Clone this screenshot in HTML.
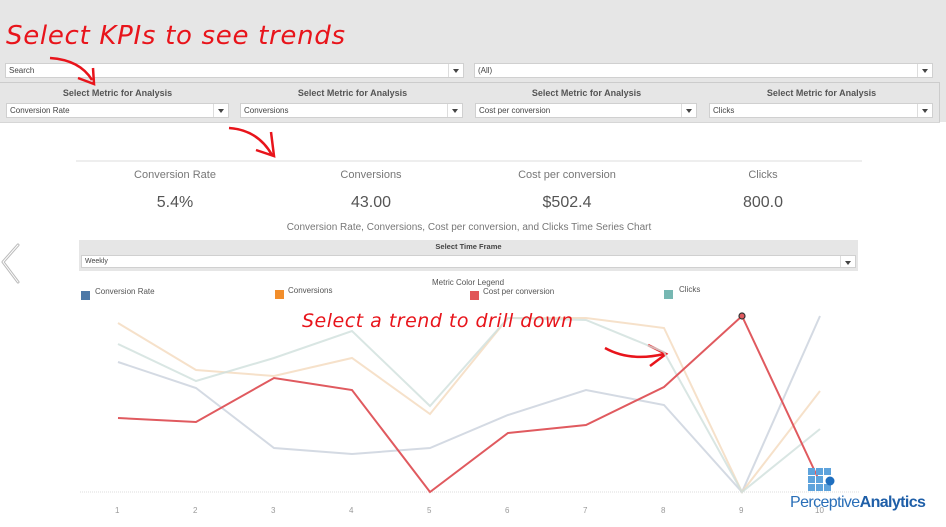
<!DOCTYPE html>
<html><head><meta charset="utf-8"><style>
*{margin:0;padding:0;box-sizing:border-box}
body{width:946px;height:527px;background:#fff;font-family:"Liberation Sans","DejaVu Sans",sans-serif;position:relative;overflow:hidden;color:#555}
.abs{position:absolute}
.top{left:0;top:0;width:946px;height:122px;background:#e6e6e6}
.dd{position:absolute;background:#fff;border:1px solid #d0d0d0;height:15px;font-size:8px;color:#444;padding-left:3px;line-height:13px}
.dd:after{content:"";position:absolute;right:4px;top:5px;border-left:3px solid transparent;border-right:3px solid transparent;border-top:4px solid #444}
.dd .sep{position:absolute;right:14px;top:0;width:1px;height:13px;background:#ddd}
.lbl{position:absolute;font-size:9px;font-weight:bold;color:#555;text-align:center;width:225px}
.hand{color:#e8141b;font-family:"DejaVu Sans","Liberation Sans",sans-serif;font-style:italic;font-weight:normal}
.kt{position:absolute;font-size:11px;color:#777;text-align:center;width:200px}
.kv{position:absolute;font-size:16px;color:#555;text-align:center;width:200px}
.leg{position:absolute;font-size:8px;color:#555}
.sw{position:absolute;width:9px;height:9px}
.ax{position:absolute;font-size:8px;color:#999;top:506px}
</style></head><body>
<div class="abs top"></div>
<div class="abs hand" style="left:6px;top:21px;font-size:26px;letter-spacing:0.7px">Select KPIs to see trends</div>
<div class="dd" style="left:5px;top:63px;width:459px">Search<span class="sep"></span></div>
<div class="dd" style="left:474px;top:63px;width:459px">(All)<span class="sep"></span></div>
<div class="abs" style="left:0;top:82px;width:940px;height:40px;border-top:1px solid #ccc;border-right:1px solid #ccc;background:#e6e6e6"></div>
<div class="abs" style="left:0;top:122px;width:940px;height:1px;background:#d6d6d6"></div>
<div class="lbl" style="left:5px;top:88px">Select Metric for Analysis</div>
<div class="lbl" style="left:240px;top:88px">Select Metric for Analysis</div>
<div class="lbl" style="left:474px;top:88px">Select Metric for Analysis</div>
<div class="lbl" style="left:709px;top:88px">Select Metric for Analysis</div>
<div class="dd" style="left:6px;top:103px;width:223px">Conversion Rate<span class="sep"></span></div>
<div class="dd" style="left:240px;top:103px;width:223px">Conversions<span class="sep"></span></div>
<div class="dd" style="left:475px;top:103px;width:222px">Cost per conversion<span class="sep"></span></div>
<div class="dd" style="left:709px;top:103px;width:224px">Clicks<span class="sep"></span></div>

<svg class="abs" style="left:0;top:0" width="946" height="527">
<path d="M50 58 Q80 60 92 80" stroke="#e8141b" stroke-width="2.5" fill="none"/>
<path d="M78 78 L94 84 L93 68" stroke="#e8141b" stroke-width="2.5" fill="none"/>
<path d="M229 128 Q258 130 272 155" stroke="#e8141b" stroke-width="2.5" fill="none"/>
<path d="M256 150 L274 156 L271 132" stroke="#e8141b" stroke-width="2.5" fill="none"/>
<path d="M605 348 Q630 362 664 354" stroke="#e8141b" stroke-width="2.5" fill="none"/>
<path d="M648 345 L666 354 L650 366" stroke="#e8141b" stroke-width="2.5" fill="none"/>
<path d="M18 245 L3 262 L18 282" stroke="#bbb" stroke-width="3" fill="none" stroke-linejoin="round" stroke-linecap="round"/>
<path d="M18 245 L3 262 L18 282" stroke="#fff" stroke-width="1" fill="none" stroke-linejoin="round" stroke-linecap="round"/>
<line x1="76" y1="161" x2="862" y2="161" stroke="#ddd"/>
<line x1="80" y1="492" x2="860" y2="492" stroke="#ddd" stroke-dasharray="1 1"/>
<polyline fill="none" stroke="#c9d1dc" stroke-width="2" opacity=".8" points="118,362 196,388 274,448 352,454 430,448 508,415 586,390 664,405 742,492 820,316"/>
<polyline fill="none" stroke="#f4d9bd" stroke-width="2" opacity=".8" points="118,323 196,370 274,376 352,358 430,414 508,318 586,318 664,328 742,492 820,391"/>
<polyline fill="none" stroke="#cfe0dc" stroke-width="2" opacity=".8" points="118,344 196,381 274,358 352,331 430,406 508,318 586,320 664,352 742,492 820,429"/>
<polyline fill="none" stroke="#e05a5f" stroke-width="2" points="118,418 196,422 274,378 352,390 430,492 508,433 586,425 664,387 742,316 818,478"/>
<circle cx="742" cy="316" r="3" fill="#e05a5f" stroke="#333" stroke-width="1.2"/>
<g fill="#5ea3dc">
<rect x="808" y="468" width="7" height="7"/><rect x="816" y="468" width="7" height="7"/><rect x="824" y="468" width="7" height="7"/>
<rect x="808" y="476" width="7" height="7"/><rect x="816" y="476" width="7" height="7"/>
<rect x="808" y="484" width="7" height="7"/><rect x="816" y="484" width="7" height="7"/><rect x="824" y="484" width="7" height="7"/>
</g>
<circle cx="830" cy="481" r="4.5" fill="#1f6fbf"/>
</svg>

<div class="kt" style="left:75px;top:169px">Conversion Rate</div>
<div class="kt" style="left:271px;top:169px">Conversions</div>
<div class="kt" style="left:467px;top:169px">Cost per conversion</div>
<div class="kt" style="left:663px;top:169px">Clicks</div>
<div class="kv" style="left:75px;top:194px">5.4%</div>
<div class="kv" style="left:271px;top:194px">43.00</div>
<div class="kv" style="left:467px;top:194px">$502.4</div>
<div class="kv" style="left:663px;top:194px">800.0</div>
<div class="abs" style="left:80px;top:222px;width:778px;text-align:center;font-size:10px;color:#777">Conversion Rate, Conversions, Cost per conversion, and Clicks Time Series Chart</div>
<div class="abs" style="left:79px;top:240px;width:779px;height:31px;background:#e6e6e6"></div>
<div class="abs" style="left:79px;top:242px;width:779px;text-align:center;font-size:7.5px;font-weight:bold;color:#444">Select Time Frame</div>
<div class="dd" style="left:81px;top:255px;width:775px;height:13px;font-size:7px;line-height:11px">Weekly<span class="sep" style="height:11px"></span></div>
<div class="leg" style="left:432px;top:278px">Metric Color Legend</div>
<div class="sw" style="left:81px;top:291px;background:#4e79a7"></div><div class="leg" style="left:95px;top:287px">Conversion Rate</div>
<div class="sw" style="left:275px;top:290px;background:#f28e2b"></div><div class="leg" style="left:288px;top:286px">Conversions</div>
<div class="sw" style="left:470px;top:291px;background:#e15759"></div><div class="leg" style="left:483px;top:287px">Cost per conversion</div>
<div class="sw" style="left:664px;top:290px;background:#76b7b2"></div><div class="leg" style="left:679px;top:285px">Clicks</div>
<div class="abs hand" style="left:302px;top:310px;font-size:19px;letter-spacing:0.5px">Select a trend to drill down</div>
<div class="ax" style="left:115px">1</div><div class="ax" style="left:193px">2</div><div class="ax" style="left:271px">3</div><div class="ax" style="left:349px">4</div><div class="ax" style="left:427px">5</div><div class="ax" style="left:505px">6</div><div class="ax" style="left:583px">7</div><div class="ax" style="left:661px">8</div><div class="ax" style="left:739px">9</div><div class="ax" style="left:815px">10</div>
<div class="abs" style="left:790px;top:494px;font-size:16px;color:#2a6fb8;letter-spacing:-0.6px;white-space:nowrap">Perceptive<b style="color:#1f5fa8">Analytics</b></div>
</body></html>
